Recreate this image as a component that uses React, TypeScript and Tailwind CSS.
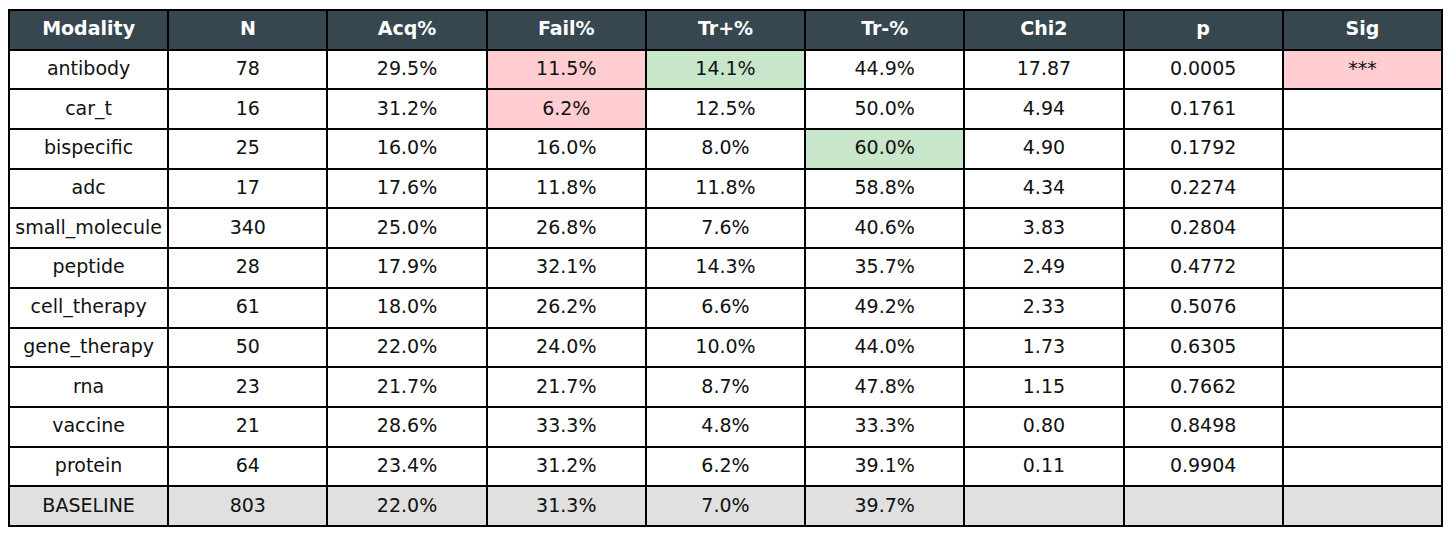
const headers = ["Modality", "N", "Acq%", "Fail%", "Tr+%", "Tr-%", "Chi2", "p", "Sig"]

type Row = { cells: string[]; tint?: Record<number, string>; base?: boolean }

const rows: Row[] = [
  { cells: ["antibody", "78", "29.5%", "11.5%", "14.1%", "44.9%", "17.87", "0.0005", "***"], tint: { 3: "bg-[#ffcdd2]", 4: "bg-[#c8e6c9]", 8: "bg-[#ffcdd2]" } },
  { cells: ["car_t", "16", "31.2%", "6.2%", "12.5%", "50.0%", "4.94", "0.1761", ""], tint: { 3: "bg-[#ffcdd2]" } },
  { cells: ["bispecific", "25", "16.0%", "16.0%", "8.0%", "60.0%", "4.90", "0.1792", ""], tint: { 5: "bg-[#c8e6c9]" } },
  { cells: ["adc", "17", "17.6%", "11.8%", "11.8%", "58.8%", "4.34", "0.2274", ""] },
  { cells: ["small_molecule", "340", "25.0%", "26.8%", "7.6%", "40.6%", "3.83", "0.2804", ""] },
  { cells: ["peptide", "28", "17.9%", "32.1%", "14.3%", "35.7%", "2.49", "0.4772", ""] },
  { cells: ["cell_therapy", "61", "18.0%", "26.2%", "6.6%", "49.2%", "2.33", "0.5076", ""] },
  { cells: ["gene_therapy", "50", "22.0%", "24.0%", "10.0%", "44.0%", "1.73", "0.6305", ""] },
  { cells: ["rna", "23", "21.7%", "21.7%", "8.7%", "47.8%", "1.15", "0.7662", ""] },
  { cells: ["vaccine", "21", "28.6%", "33.3%", "4.8%", "33.3%", "0.80", "0.8498", ""] },
  { cells: ["protein", "64", "23.4%", "31.2%", "6.2%", "39.1%", "0.11", "0.9904", ""] },
  { cells: ["BASELINE", "803", "22.0%", "31.3%", "7.0%", "39.7%", "", "", ""], base: true },
]

export default function App() {
  return (
    <div className="w-[1456px] h-[534px] bg-white pl-[8px] pt-[9px]" style={{ fontFamily: '"DejaVu Sans", sans-serif' }}>
      <div className="w-[1435px] h-[518px] grid grid-cols-9 grid-rows-[repeat(13,minmax(0,1fr))] border-t-2 border-l-2 border-black text-[19px] text-[#111]">
        {headers.map((h) => (
          <div key={h} className="flex items-center justify-center pb-[3px] border-r-2 border-b-2 border-black bg-[#37474f] font-bold leading-none text-white">
            {h}
          </div>
        ))}
        {rows.map((r) =>
          r.cells.map((c, i) => (
            <div
              key={r.cells[0] + i}
              className={
                "flex items-center justify-center pb-[2px] border-r-2 border-b-2 border-black leading-none " +
                (r.base ? "bg-[#e0e0e0]" : r.tint?.[i] ?? "bg-white")
              }
            >
              {c}
            </div>
          ))
        )}
      </div>
    </div>
  )
}
